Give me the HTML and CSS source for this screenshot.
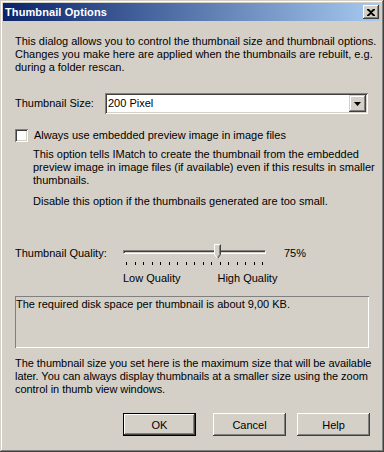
FILE: index.html
```html
<!DOCTYPE html>
<html>
<head>
<meta charset="utf-8">
<link rel="stylesheet" href="styles.css">
</head>
<body>
<div class="window">
  <div class="titlebar">
    <span class="title">Thumbnail Options</span>
    <span class="close"><svg width="8" height="7" viewBox="0 0 8 7"><path d="M0 0h2l2 2 2-2h2v1L5 3.5 8 6v1H6L4 5 2 7H0V6l3-2.5L0 1z" fill="#000"/></svg></span>
  </div>
  <div class="content">
    <p class="intro">This dialog allows you to control the thumbnail size and thumbnail options.<br>Changes you make here are applied when the thumbnails are rebuilt, e.g.<br>during a folder rescan.</p>

    <div class="size-row">
      <span class="label">Thumbnail Size:</span>
      <div class="combo">
        <span class="combo-value">200 Pixel</span>
        <span class="combo-btn"><svg width="7" height="4" viewBox="0 0 7 4"><path d="M0 0h7L3.5 4z" fill="#000"/></svg></span>
      </div>
    </div>

    <div class="check-row">
      <span class="checkbox"></span>
      <span>Always use embedded preview image in image files</span>
    </div>
    <div class="check-desc">
      <p>This option tells IMatch to create the thumbnail from the embedded<br>preview image in image files (if available) even if this results in smaller<br>thumbnails.</p>
      <p class="disable">Disable this option if the thumbnails generated are too small.</p>
    </div>

    <div class="quality-row">
      <span class="label qlabel">Thumbnail Quality:</span>
      <div class="slider">
        <div class="track"></div>
        <svg class="thumb" width="7" height="15" viewBox="0 0 7 15"><path d="M0.5 0.5h6v10l-3 4-3-4z" fill="#d4d0c8"/><path d="M0.5 11V0.5h6" stroke="#fff" fill="none"/><path d="M6.5 0.5v10l-3 4" stroke="#404040" fill="none"/><path d="M5.5 1.5v9l-2 2.7" stroke="#808080" fill="none"/><path d="M0.5 10.5l3 4" stroke="#fff" fill="none"/></svg>
        <div class="ticks">
          <i></i><i></i><i></i><i></i><i></i><i></i><i></i><i></i><i></i><i></i><i></i><i></i><i></i><i></i><i></i><i></i><i></i>
        </div>
        <div class="scale"><span>Low Quality</span><span class="high">High Quality</span></div>
      </div>
      <span class="pct">75%</span>
    </div>

    <div class="infobox">The required disk space per thumbnail is about 9,00 KB.</div>

    <p class="outro">The thumbnail size you set here is the maximum size that will be available<br>later. You can always display thumbnails at a smaller size using the zoom<br>control in thumb view windows.</p>

    <div class="buttons">
      <button class="btn default">OK</button>
      <button class="btn cancel">Cancel</button>
      <button class="btn help">Help</button>
    </div>
  </div>
</div>
</body>
</html>
```

FILE: styles.css
```css
* { box-sizing: border-box; }
html, body { margin: 0; padding: 0; background: #d4d0c8; }
body {
  font-family: "Liberation Sans", Arial, sans-serif;
  font-size: 11px;
  line-height: 13px;
  color: #000;
}
.window {
  width: 384px;
  height: 452px;
  background: #d4d0c8;
  padding: 3px 4px 4px 3px;
  box-shadow: inset -1px -1px #404040, inset 1px 1px #d4d0c8, inset -2px -2px #808080, inset 2px 2px #fff;
}
.titlebar {
  height: 18px;
  background: linear-gradient(to right, #0a246a, #a6caf0);
  display: flex;
  align-items: center;
  justify-content: space-between;
  padding: 0 1px 0 2px;
}
.title {
  color: #fff;
  font-weight: bold;
  font-size: 11px;
  letter-spacing: 0.1px;
}
.close {
  width: 16px;
  height: 14px;
  background: #d4d0c8;
  box-shadow: inset -1px -1px #404040, inset 1px 1px #fff, inset -2px -2px #808080;
  display: flex;
  align-items: center;
  justify-content: center;
}
.content {
  padding: 14px 0 0 12px;
  white-space: nowrap;
}
p { margin: 0; }
.intro { height: 39px; }
.size-row {
  display: flex;
  align-items: center;
  margin-top: 19px;
}
.label { display: inline-block; width: 90px; }
.combo {
  width: 263px;
  height: 21px;
  background: #fff;
  display: flex;
  align-items: center;
  justify-content: space-between;
  padding: 2px;
  box-shadow: inset 1px 1px #808080, inset -1px -1px #fff, inset 2px 2px #404040, inset -2px -2px #d4d0c8;
}
.combo-value { padding-left: 1px; }
.combo-btn {
  width: 17px;
  height: 17px;
  background: #d4d0c8;
  box-shadow: inset -1px -1px #404040, inset 1px 1px #d4d0c8, inset -2px -2px #808080, inset 2px 2px #fff;
  display: flex;
  align-items: center;
  justify-content: center;
}
.check-row {
  display: flex;
  align-items: center;
  margin-top: 15px;
  height: 13px;
}
.checkbox {
  width: 13px;
  height: 13px;
  background: #fff;
  margin-right: 6px;
  box-shadow: inset 1px 1px #808080, inset -1px -1px #fff, inset 2px 2px #404040, inset -2px -2px #d4d0c8;
}
.check-desc {
  margin-top: 6px;
  padding-left: 18px;
}
.disable { margin-top: 8px; }
.quality-row {
  display: flex;
  align-items: flex-start;
  margin-top: 39px;
}
.qlabel { width: 108px; }
.slider {
  position: relative;
  width: 143px;
  padding-top: 3px;
}
.track {
  height: 4px;
  background: #d4d0c8;
  border-top: 1px solid #808080;
  border-left: 1px solid #808080;
  border-bottom: 1px solid #fff;
  border-right: 1px solid #fff;
  box-shadow: inset 1px 1px #404040;
}
.thumb {
  position: absolute;
  left: 91px;
  top: -3px;
}
.ticks {
  display: flex;
  justify-content: space-between;
  padding: 0 3px;
  margin-top: 8px;
  height: 3px;
}
.ticks i {
  display: block;
  width: 1px;
  height: 3px;
  background: #000;
}
.scale {
  display: flex;
  margin-top: 7px;
}
.scale .high { margin-left: 37px; }
.pct { margin-left: 18px; }
.infobox {
  width: 354px;
  height: 52px;
  margin-top: 11px;
  padding: 2px 1px;
  box-shadow: inset 1px 1px #808080, inset -1px -1px #fff;
}
.outro { margin-top: 9px; letter-spacing: -0.05px; }
.buttons {
  display: flex;
  margin-top: 17px;
  padding-left: 108px;
}
.btn {
  font-family: "Liberation Sans", Arial, sans-serif;
  font-size: 11px;
  width: 73px;
  height: 23px;
  padding: 0;
  border: none;
  background: #d4d0c8;
  color: #000;
  box-shadow: inset -1px -1px #404040, inset 1px 1px #fff, inset -2px -2px #808080, inset 2px 2px #d4d0c8;
}
.btn.default {
  box-shadow: inset 0 0 0 1px #000, inset -2px -2px #404040, inset 2px 2px #fff, inset -3px -3px #808080;
}
.cancel { margin-left: 17px; }
.help { margin-left: 11px; }
```
